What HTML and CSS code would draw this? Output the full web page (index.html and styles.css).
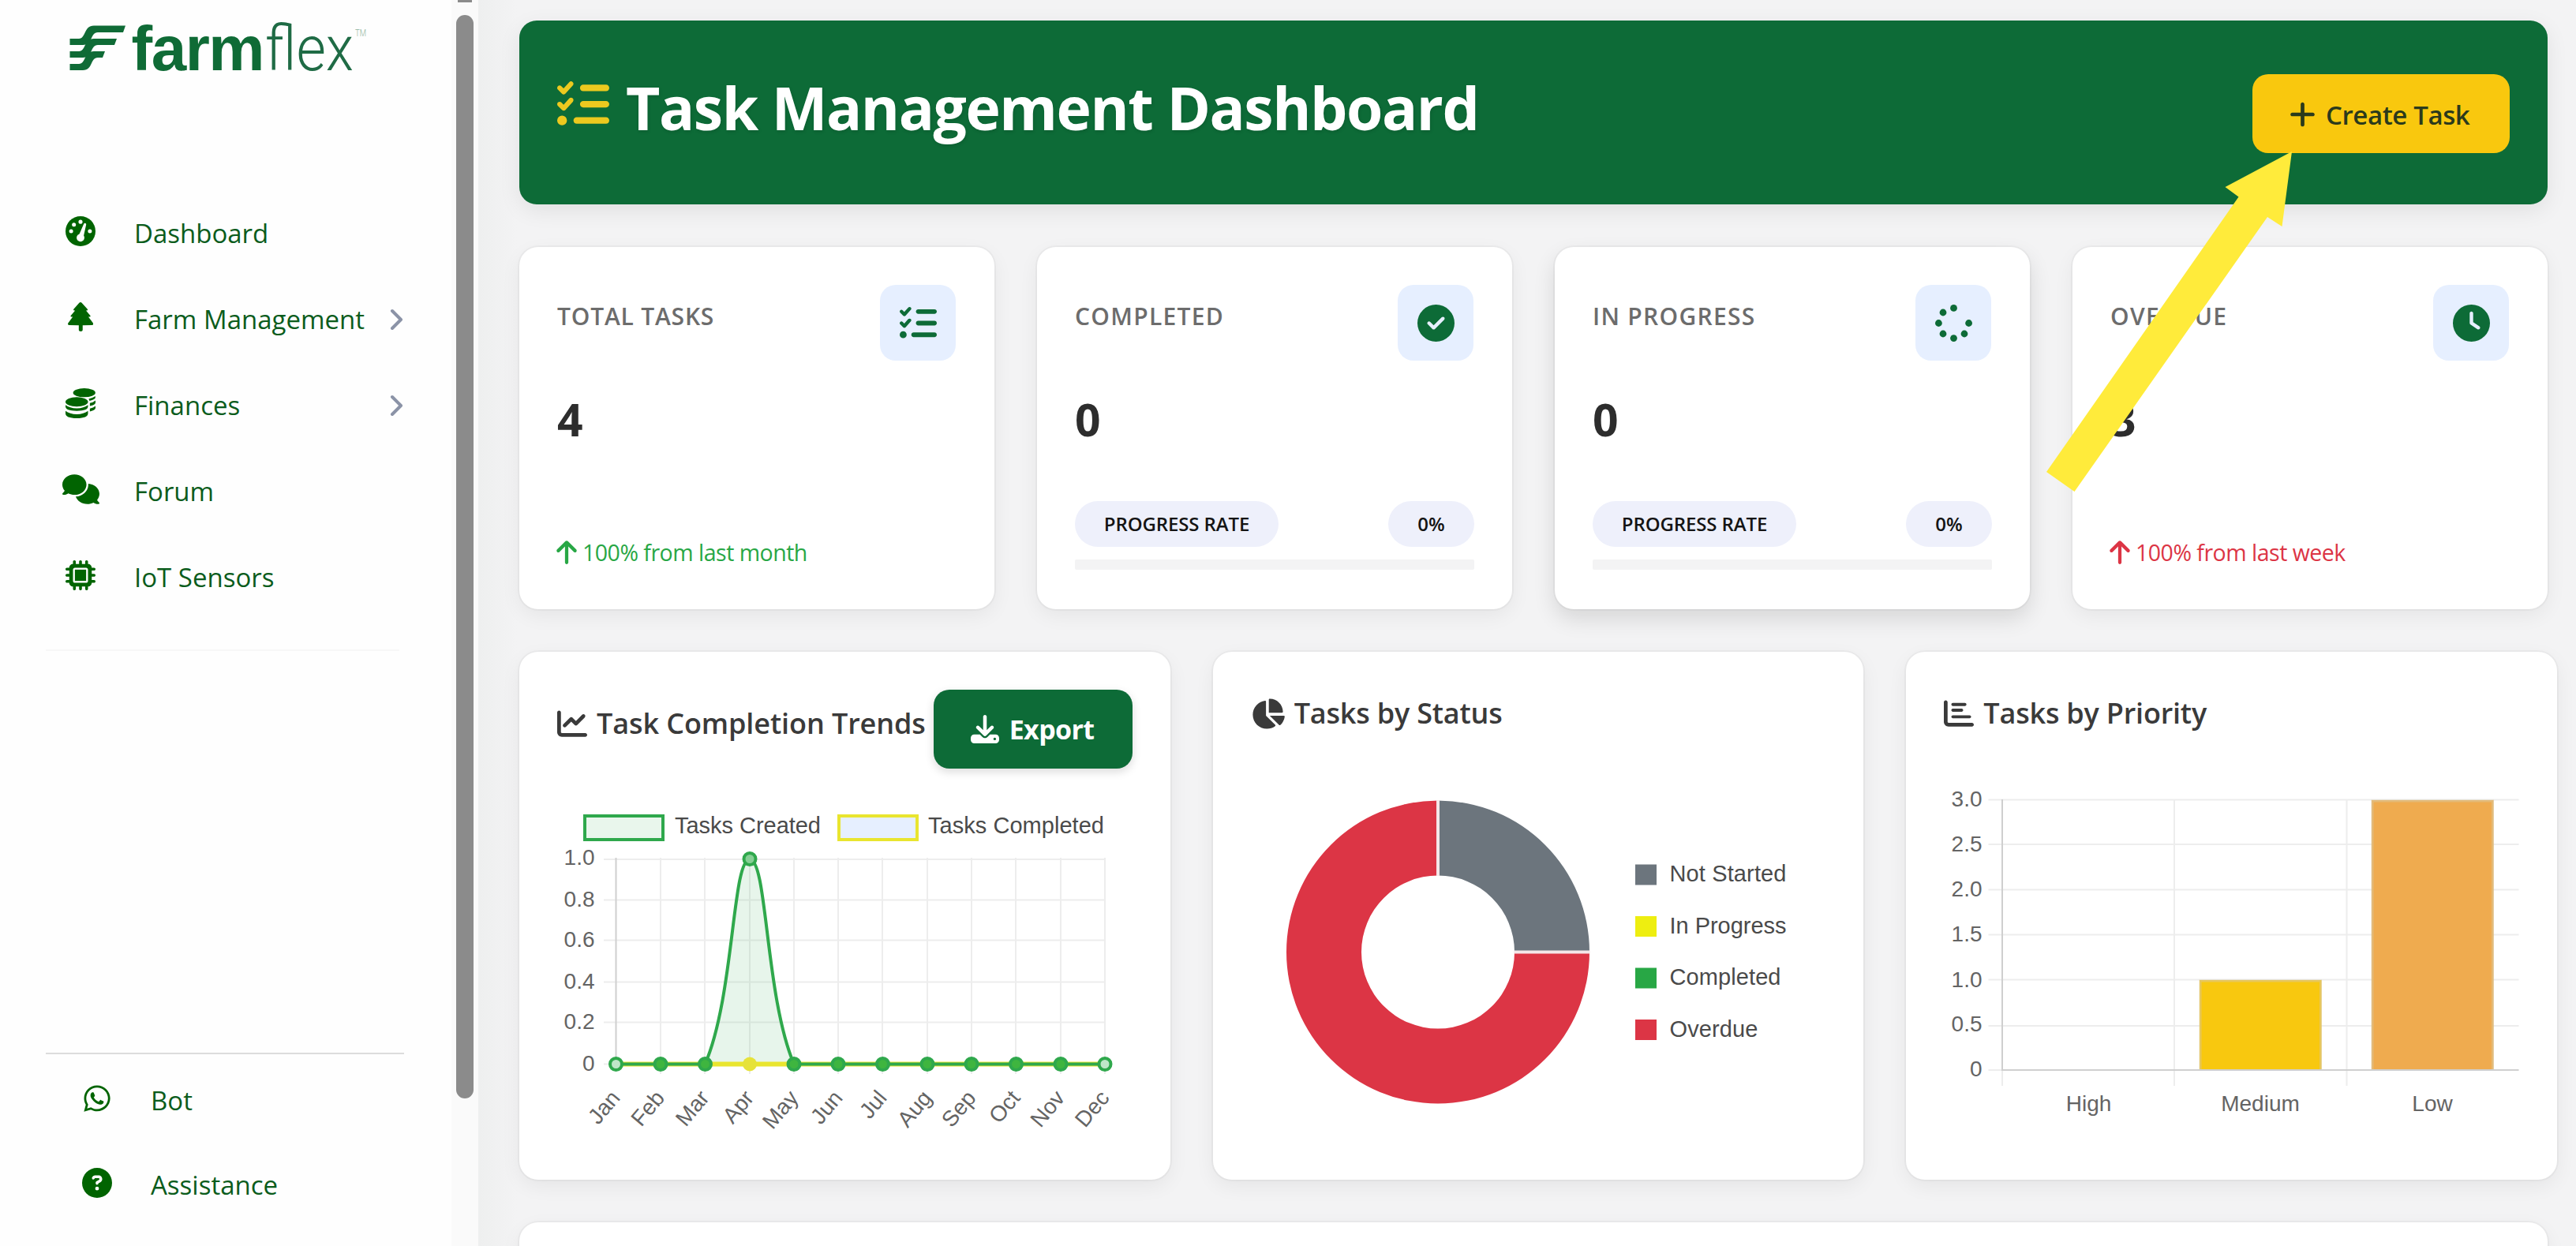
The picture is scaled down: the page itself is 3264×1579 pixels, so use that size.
FILE: index.html
```html
<!DOCTYPE html>
<html lang="en">
<head>
<meta charset="utf-8">
<title>Task Management Dashboard</title>
<link rel="stylesheet" href="styles.css">
</head>
<body>
<svg class="sprite" aria-hidden="true">
  <symbol id="i-list" viewBox="0 0 512 512"><path d="M152.1 38.2c9.9 8.9 10.7 24 1.8 33.9l-72 80c-4.4 4.9-10.6 7.8-17.2 7.9s-12.9-2.4-17.6-7L7 113C-2.3 103.6-2.3 88.4 7 79s24.6-9.4 33.9 0l22.1 22.1 55.1-61.2c8.9-9.9 24-10.7 33.9-1.8zm0 160c9.9 8.9 10.7 24 1.8 33.9l-72 80c-4.4 4.9-10.6 7.8-17.2 7.9s-12.9-2.4-17.6-7L7 273c-9.4-9.4-9.4-24.6 0-33.9s24.6-9.4 33.9 0l22.1 22.1 55.1-61.2c8.9-9.9 24-10.7 33.9-1.8zM224 96c0-17.7 14.3-32 32-32H480c17.7 0 32 14.3 32 32s-14.3 32-32 32H256c-17.7 0-32-14.3-32-32zm0 160c0-17.7 14.3-32 32-32H480c17.7 0 32 14.3 32 32s-14.3 32-32 32H256c-17.7 0-32-14.3-32-32zM160 416c0-17.7 14.3-32 32-32H480c17.7 0 32 14.3 32 32s-14.3 32-32 32H192c-17.7 0-32-14.3-32-32zM48 368a48 48 0 1 1 0 96 48 48 0 1 1 0-96z"/></symbol>
  <symbol id="i-check" viewBox="0 0 512 512"><path d="M256 512A256 256 0 1 0 256 0a256 256 0 1 0 0 512zM369 209L241 337c-9.4 9.4-24.6 9.4-33.9 0l-64-64c-9.4-9.4-9.4-24.6 0-33.9s24.6-9.4 33.9 0l47 47L335 175c9.4-9.4 24.6-9.4 33.9 0s9.4 24.6 0 33.9z"/></symbol>
  <symbol id="i-spinner" viewBox="0 0 512 512"><circle cx="256" cy="48" r="48"/><circle cx="256" cy="464" r="48"/><circle cx="48" cy="256" r="48"/><circle cx="464" cy="256" r="48"/><circle cx="109" cy="403" r="48"/><circle cx="109" cy="109" r="48"/><circle cx="403" cy="403" r="48"/></symbol>
  <symbol id="i-clock" viewBox="0 0 512 512"><path d="M256 0a256 256 0 1 1 0 512A256 256 0 1 1 256 0zM232 120V256c0 8 4 15.5 10.7 20l96 64c11 7.4 25.9 4.4 33.3-6.7s4.4-25.9-6.7-33.3L280 243.2V120c0-13.3-10.7-24-24-24s-24 10.7-24 24z"/></symbol>
  <symbol id="i-up" viewBox="0 0 384 512"><path d="M214.6 41.4c-12.5-12.5-32.8-12.5-45.3 0l-160 160c-12.5 12.5-12.5 32.8 0 45.3s32.8 12.5 45.3 0L160 141.2V448c0 17.7 14.3 32 32 32s32-14.3 32-32V141.2L329.4 246.6c12.5 12.5 32.8 12.5 45.3 0s12.5-32.8 0-45.3l-160-160z"/></symbol>
  <symbol id="i-plus" viewBox="0 0 448 512"><path d="M256 80c0-17.7-14.3-32-32-32s-32 14.3-32 32V224H48c-17.7 0-32 14.3-32 32s14.3 32 32 32H192V432c0 17.7 14.3 32 32 32s32-14.3 32-32V288H400c17.7 0 32-14.3 32-32s-14.3-32-32-32H256V80z"/></symbol>
  <symbol id="i-download" viewBox="0 0 512 512"><path d="M288 32c0-17.7-14.3-32-32-32s-32 14.3-32 32V274.7l-73.4-73.4c-12.5-12.5-32.8-12.5-45.3 0s-12.5 32.8 0 45.3l128 128c12.5 12.5 32.8 12.5 45.3 0l128-128c12.5-12.5 12.5-32.8 0-45.3s-32.8-12.5-45.3 0L288 274.7V32zM64 352c-35.3 0-64 28.7-64 64v32c0 35.3 28.7 64 64 64H448c35.3 0 64-28.7 64-64V416c0-35.3-28.7-64-64-64H346.5l-45.3 45.3c-25 25-65.5 25-90.5 0L165.5 352H64zm368 56a24 24 0 1 1 0 48 24 24 0 1 1 0-48z"/></symbol>
  <symbol id="i-line" viewBox="0 0 512 512"><path d="M64 64c0-17.7-14.3-32-32-32S0 46.3 0 64V400c0 44.2 35.8 80 80 80H480c17.7 0 32-14.3 32-32s-14.3-32-32-32H80c-8.8 0-16-7.2-16-16V64zm406.6 86.6c12.5-12.5 12.5-32.8 0-45.3s-32.8-12.5-45.3 0L320 210.7l-57.4-57.4c-12.5-12.5-32.8-12.5-45.3 0l-112 112c-12.5 12.5-12.5 32.8 0 45.3s32.8 12.5 45.3 0L240 221.3l57.4 57.4c12.5 12.5 32.8 12.5 45.3 0l128-128z"/></symbol>
  <symbol id="i-pie" viewBox="0 0 576 512"><path d="M304 240V16.6c0-9 7-16.6 16-16.6C443.7 0 544 100.3 544 224c0 9-7.6 16-16.6 16H304zM32 272C32 150.7 122.1 50.3 239 34.3c9.2-1.3 17 6.1 17 15.4V288L412.5 444.5c6.7 6.7 6.2 17.7-1.5 23.1C371.8 495.6 323.8 512 272 512C139.5 512 32 404.6 32 272zm526.4 16c9.3 0 16.6 7.8 15.4 17c-7.7 55.9-34.6 105.6-73.9 142.3c-6 5.6-15.4 5.2-21.2-.7L320 288H558.4z"/></symbol>
  <symbol id="i-bar" viewBox="0 0 512 512"><path d="M32 32c17.7 0 32 14.3 32 32V400c0 8.8 7.2 16 16 16H480c17.7 0 32 14.3 32 32s-14.3 32-32 32H80c-44.2 0-80-35.8-80-80V64C0 46.3 14.3 32 32 32zm96 72c0-14 12-26 26-26l206 0c14 0 26 12 26 26s-12 26-26 26H154c-14 0-26-12-26-26zm26 72H304c14 0 26 12 26 26s-12 26-26 26H154c-14 0-26-12-26-26s12-26 26-26zm0 112H440c14 0 26 12 26 26s-12 26-26 26H154c-14 0-26-12-26-26s12-26 26-26z"/></symbol>
  <symbol id="i-gauge" viewBox="0 0 512 512"><circle cx="256" cy="256" r="256"/><g fill="#fff"><circle cx="256" cy="96" r="34"/><circle cx="144" cy="144" r="34"/><circle cx="96" cy="256" r="34"/><circle cx="416" cy="256" r="34"/><circle cx="256" cy="368" r="66"/><path d="M218 348L312 130q12-18 31-8 16 10 8 30L300 380z"/></g></symbol>
  <symbol id="i-tree" viewBox="0 0 448 512"><path d="M224 0q13 0 22 10l100 112q12 16-6 22h-20l76 90q12 18-8 22h-26l78 104 6 10q8 30-18 30l-166 4v84q0 24-34 24t-34-24v-84l-174-4q-24-4-16-30l84-114h-26q-20-4-8-22l76-90h-20q-18-6-6-22L202 10q9-10 22-10z"/></symbol>
  <symbol id="i-coins" viewBox="0 0 512 512"><ellipse cx="320" cy="76" rx="190" ry="76"/><ellipse cx="192" cy="232" rx="192" ry="80"/><path d="M0 286q70 56 192 56t192-56v24q0 76-192 76T0 310zM0 388q70 56 192 56t192-56v40q0 84-192 84T0 428zM396 182q70-16 114-46v20q0 40-100 60zM416 254q60-14 96-44v36q0 36-96 58zM416 346q60-14 96-44v36q0 36-96 58z"/></symbol>
  <symbol id="i-comments" viewBox="0 0 640 512"><path d="M208 352c114.9 0 208-78.8 208-176S322.9 0 208 0S0 78.8 0 176c0 38.6 14.7 74.3 39.6 103.4c-3.5 9.4-8.7 17.7-14.2 24.7c-4.8 6.2-9.7 11-13.3 14.3c-1.8 1.6-3.3 2.9-4.3 3.7c-.5 .4-.9 .7-1.1 .8l-.2 .2C1 327.2-1.4 334.4 .8 340.9S9.1 352 16 352c21.8 0 43.8-5.6 62.1-12.5c9.2-3.5 17.8-7.4 25.2-11.4C134.1 343.3 169.8 352 208 352zM448 176c0 112.3-99.1 196.9-216.5 207C255.8 457.4 336.4 512 432 512c38.2 0 73.9-8.7 104.7-23.9c7.5 4 16 7.9 25.2 11.4c18.3 6.9 40.3 12.5 62.1 12.5c6.9 0 13.1-4.5 15.2-11.1c2.1-6.6-.2-13.8-5.8-17.9l-.2-.2c-.2-.2-.6-.4-1.1-.8c-1-.8-2.5-2-4.3-3.7c-3.6-3.3-8.5-8.1-13.3-14.3c-5.5-7-10.7-15.4-14.2-24.7c24.9-29 39.6-64.7 39.6-103.4c0-92.8-84.9-168.9-192.6-175.5c.4 5.1 .6 10.3 .6 15.5z"/></symbol>
  <symbol id="i-chip" viewBox="0 0 512 512"><path fill-rule="evenodd" d="M176 24c0-13.3-10.7-24-24-24s-24 10.7-24 24V64c-35.3 0-64 28.7-64 64H24c-13.3 0-24 10.7-24 24s10.7 24 24 24H64v56H24c-13.3 0-24 10.7-24 24s10.7 24 24 24H64v56H24c-13.3 0-24 10.7-24 24s10.7 24 24 24H64c0 35.3 28.7 64 64 64v40c0 13.3 10.7 24 24 24s24-10.7 24-24V448h56v40c0 13.3 10.7 24 24 24s24-10.7 24-24V448h56v40c0 13.3 10.7 24 24 24s24-10.7 24-24V448c35.3 0 64-28.7 64-64h40c13.3 0 24-10.7 24-24s-10.7-24-24-24H448V280h40c13.3 0 24-10.7 24-24s-10.7-24-24-24H448V176h40c13.3 0 24-10.7 24-24s-10.7-24-24-24H448c0-35.3-28.7-64-64-64V24c0-13.3-10.7-24-24-24s-24 10.7-24 24V64H280V24c0-13.3-10.7-24-24-24s-24 10.7-24 24V64H176V24zM160 128H352c17.7 0 32 14.3 32 32V352c0 17.7-14.3 32-32 32H160c-17.7 0-32-14.3-32-32V160c0-17.7 14.3-32 32-32z"/><path d="M160 160h192v192H160z"/></symbol>
  <symbol id="i-whatsapp" viewBox="0 0 448 512"><path d="M380.9 97.1C339 55.1 283.2 32 223.9 32c-122.4 0-222 99.6-222 222 0 39.1 10.2 77.3 29.6 111L0 480l117.7-30.9c32.4 17.7 68.9 27 106.1 27h.1c122.3 0 224.1-99.6 224.1-222 0-59.3-25.2-115-67.1-157zm-157 341.6c-33.2 0-65.7-8.9-94-25.7l-6.7-4-69.8 18.3L72 359.2l-4.4-7c-18.5-29.4-28.2-63.3-28.2-98.2 0-101.7 82.8-184.5 184.6-184.5 49.3 0 95.6 19.2 130.4 54.1 34.8 34.9 56.2 81.2 56.1 130.5 0 101.8-84.9 184.6-186.6 184.6zm101.2-138.2c-5.5-2.8-32.8-16.2-37.9-18-5.1-1.9-8.8-2.8-12.5 2.8-3.7 5.6-14.3 18-17.6 21.8-3.2 3.7-6.5 4.2-12 1.4-32.6-16.3-54-29.1-75.5-66-5.7-9.8 5.7-9.1 16.3-30.3 1.8-3.7.9-6.9-.5-9.7-1.4-2.8-12.5-30.1-17.1-41.2-4.5-10.8-9.1-9.3-12.5-9.5-3.2-.2-6.9-.2-10.6-.2-3.7 0-9.7 1.4-14.8 6.9-5.1 5.6-19.4 19-19.4 46.3 0 27.3 19.9 53.7 22.6 57.4 2.8 3.7 39.1 59.7 94.8 83.8 35.2 15.2 49 16.5 66.6 13.9 10.7-1.6 32.8-13.4 37.4-26.4 4.6-13 4.6-24.1 3.2-26.4-1.3-2.5-5-3.9-10.5-6.6z"/></symbol>
  <symbol id="i-help" viewBox="0 0 512 512"><path d="M256 512A256 256 0 1 0 256 0a256 256 0 1 0 0 512zM169.8 165.3c7.9-22.3 29.1-37.3 52.8-37.3h58.3c34.9 0 63.1 28.3 63.1 63.1c0 22.6-12.1 43.5-31.7 54.8L280 264.4c-.2 13-10.9 23.6-24 23.6c-13.3 0-24-10.7-24-24V250.5c0-8.6 4.6-16.5 12.1-20.8l44.3-25.4c4.7-2.7 7.6-7.7 7.6-13.1c0-8.4-6.8-15.1-15.1-15.1H222.6c-3.4 0-6.4 2.1-7.5 5.3l-.4 1.2c-4.4 12.5-18.2 19-30.6 14.6s-19-18.2-14.6-30.6l.4-1.2zM224 352a32 32 0 1 1 64 0 32 32 0 1 1-64 0z"/></symbol>
  <symbol id="i-chevron" viewBox="0 0 18 28"><path d="M3 3l11 11L3 25" fill="none" stroke="#8b93a7" stroke-width="4" stroke-linecap="round" stroke-linejoin="round"/></symbol>
</svg>

<div class="app">
  <aside class="sidebar">
    <div class="sidebar-body">
      <svg class="logo" viewBox="58 0 454 110">
        <g fill="#0f6b36">
          <path d="M88.5 49H100C109 49 106 32.6 119 32.6H159L156 41H124C114 41 118 57 105 57H88.5z"/>
          <path d="M88.5 65H100C109 65 106 49 119 49H148L145 57H124C114 57 118 73 105 73H88.5z"/>
          <path d="M88.5 81H100C109 81 106 65 119 65H133L130 73H124C114 73 118 89 105 89H88.5z"/>
        </g>
        <text class="logo-bold" x="166.5" y="89" textLength="169">farm</text>
        <text class="logo-thin" x="336" y="89" textLength="112" lengthAdjust="spacingAndGlyphs">flex</text>
        <text class="logo-tm" x="450" y="46" textLength="14" lengthAdjust="spacingAndGlyphs">TM</text>
      </svg>
      <nav class="nav">
        <a class="nav-item"><span class="nav-icon"><svg class="s36"><use href="#i-gauge"/></svg></span>Dashboard</a>
        <a class="nav-item"><span class="nav-icon"><svg class="tree"><use href="#i-tree"/></svg></span>Farm Management<svg class="chevron"><use href="#i-chevron"/></svg></a>
        <a class="nav-item"><span class="nav-icon"><svg class="s36"><use href="#i-coins"/></svg></span>Finances<svg class="chevron"><use href="#i-chevron"/></svg></a>
        <a class="nav-item"><span class="nav-icon"><svg class="comments"><use href="#i-comments"/></svg></span>Forum</a>
        <a class="nav-item"><span class="nav-icon"><svg class="s36"><use href="#i-chip"/></svg></span>IoT Sensors</a>
      </nav>
      <nav class="nav nav-bottom">
        <a class="nav-item"><span class="nav-icon"><svg class="whatsapp"><use href="#i-whatsapp"/></svg></span>Bot</a>
        <a class="nav-item"><span class="nav-icon"><svg class="s36"><use href="#i-help"/></svg></span>Assistance</a>
      </nav>
    </div>
    <div class="scrollbar"><i class="scroll-cap"></i><i class="scroll-thumb"></i></div>
  </aside>

  <main class="main">
    <header class="banner">
      <h1 class="banner-title"><svg class="banner-icon"><use href="#i-list"/></svg>Task Management Dashboard</h1>
      <button class="btn btn-create"><svg class="plus"><use href="#i-plus"/></svg>Create Task</button>
    </header>

    <section class="stats">
      <article class="card stat">
        <div class="stat-top"><span class="stat-label label-total">TOTAL TASKS</span><span class="stat-icon"><svg><use href="#i-list"/></svg></span></div>
        <div class="stat-value">4</div>
        <div class="trend up"><svg><use href="#i-up"/></svg>100% from last month</div>
      </article>
      <article class="card stat">
        <div class="stat-top"><span class="stat-label">COMPLETED</span><span class="stat-icon"><svg><use href="#i-check"/></svg></span></div>
        <div class="stat-value">0</div>
        <div class="progress"><span class="pill pill-name">PROGRESS RATE</span><span class="pill">0%</span></div>
        <div class="track"></div>
      </article>
      <article class="card stat raised">
        <div class="stat-top"><span class="stat-label">IN PROGRESS</span><span class="stat-icon"><svg><use href="#i-spinner"/></svg></span></div>
        <div class="stat-value">0</div>
        <div class="progress"><span class="pill pill-name">PROGRESS RATE</span><span class="pill">0%</span></div>
        <div class="track"></div>
      </article>
      <article class="card stat">
        <div class="stat-top"><span class="stat-label">OVERDUE</span><span class="stat-icon"><svg><use href="#i-clock"/></svg></span></div>
        <div class="stat-value">3</div>
        <div class="trend down"><svg><use href="#i-up"/></svg>100% from last week</div>
      </article>
    </section>

    <section class="charts">
      <article class="card chart">
        <div class="chart-head">
          <h2 class="chart-title tall"><svg class="s38"><use href="#i-line"/></svg>Task Completion Trends</h2>
          <button class="btn btn-export"><svg class="download"><use href="#i-download"/></svg>Export</button>
        </div>
        <svg class="plot" viewBox="706 1021 728 425">
          <rect x="741" y="1033" width="99" height="30" fill="#e9f6ec" stroke="#2fa84c" stroke-width="4"/>
          <rect x="1063" y="1033" width="99" height="30" fill="#e6efff" stroke="#e9e52f" stroke-width="4"/>
          <g class="legend"><text x="855" y="1055" textLength="185">Tasks Created</text><text x="1176" y="1055" textLength="223">Tasks Completed</text></g>
          <path class="grid" d="M765 1088H1400M765 1139.5H1400M765 1190.5H1400M765 1243.5H1400M765 1294.5H1400M765 1347.5H1400M837 1086V1360M893 1086V1360M950 1086V1360M1006 1086V1360M1062 1086V1360M1118 1086V1360M1175 1086V1360M1231 1086V1360M1287 1086V1360M1344 1086V1360M1400 1086V1360"/>
          <path class="axis" d="M780.5 1086V1347"/>
          <path d="M893.4 1347.5C930.6 1261 927.6 1088 950 1088C972.4 1088 969.4 1261 1006 1347.5z" fill="#28a745" fill-opacity=".11"/>
          <path d="M780.4 1347.5H1400" stroke="#e9e52f" stroke-width="6"/>
          <path d="M780.4 1347.5H893.4C930.6 1261 927.6 1088 950 1088C972.4 1088 969.4 1261 1006 1347.5H1400" fill="none" stroke="#2fa84c" stroke-width="4"/>
          <circle cx="950" cy="1347.5" r="9" fill="#e6e23a"/>
          <g class="points">
            <circle cx="780.5" cy="1347.5" r="7.5" class="edge"/><circle cx="837" cy="1347.5" r="7.5"/><circle cx="893.5" cy="1347.5" r="7.5"/><circle cx="950" cy="1087.5" r="7.5" class="peak"/><circle cx="1006" cy="1347.5" r="7.5"/><circle cx="1062" cy="1347.5" r="7.5"/><circle cx="1118.5" cy="1347.5" r="7.5"/><circle cx="1175" cy="1347.5" r="7.5"/><circle cx="1231" cy="1347.5" r="7.5"/><circle cx="1287.5" cy="1347.5" r="7.5"/><circle cx="1344" cy="1347.5" r="7.5"/><circle cx="1400" cy="1347.5" r="7.5" class="edge"/>
          </g>
          <g class="ticks end"><text x="753.5" y="1095">1.0</text><text x="753.5" y="1147.5">0.8</text><text x="753.5" y="1199">0.6</text><text x="753.5" y="1251.5">0.4</text><text x="753.5" y="1302.5">0.2</text><text x="753.5" y="1356">0</text></g>
          <g class="ticks end">
            <text transform="translate(787 1391) rotate(-50)">Jan</text><text transform="translate(843.5 1391) rotate(-50)">Feb</text><text transform="translate(900 1391) rotate(-50)">Mar</text><text transform="translate(956.5 1391) rotate(-50)">Apr</text><text transform="translate(1013 1391) rotate(-50)">May</text><text transform="translate(1069 1391) rotate(-50)">Jun</text><text transform="translate(1125 1391) rotate(-50)">Jul</text><text transform="translate(1182 1391) rotate(-50)">Aug</text><text transform="translate(1238 1391) rotate(-50)">Sep</text><text transform="translate(1294 1391) rotate(-50)">Oct</text><text transform="translate(1350.5 1391) rotate(-50)">Nov</text><text transform="translate(1407 1391) rotate(-50)">Dec</text>
          </g>
        </svg>
      </article>

      <article class="card chart">
        <div class="chart-head"><h2 class="chart-title"><svg class="pie"><use href="#i-pie"/></svg>Tasks by Status</h2></div>
        <svg class="plot" viewBox="1585.5 981 728 465">
          <path d="M1822.5 1013.5a192 192 0 0 1 192 192h-95a97 97 0 0 0-97-97z" fill="#6c757d"/>
          <path d="M2014.5 1205.5a192 192 0 1 1-192-192v95a97 97 0 1 0 97 97z" fill="#dc3545"/>
          <path d="M1822.5 1013V1109M1919 1205.5H2015" stroke="#f4e6e8" stroke-width="4"/>
          <rect x="2072.5" y="1094.5" width="27" height="26" fill="#6c757d"/><rect x="2072.5" y="1160" width="27" height="26" fill="#eeee10"/><rect x="2072.5" y="1225.5" width="27" height="26" fill="#28a745"/><rect x="2072.5" y="1291" width="27" height="26" fill="#dc3545"/>
          <g class="legend"><text x="2116" y="1116" textLength="148">Not Started</text><text x="2116" y="1181.5" textLength="148">In Progress</text><text x="2116" y="1247" textLength="141">Completed</text><text x="2116" y="1312.5" textLength="112">Overdue</text></g>
        </svg>
      </article>

      <article class="card chart">
        <div class="chart-head"><h2 class="chart-title"><svg class="s38"><use href="#i-bar"/></svg>Tasks by Priority</h2></div>
        <svg class="plot" viewBox="2463.500 981 728 465">
          <path class="grid" d="M2520 1012.5H3192M2520 1069H3192M2520 1126.5H3192M2520 1183.5H3192M2520 1240.5H3192M2520 1299H3192M2520 1355H2537M2537.5 1355V1375M2755.5 1012V1375M2974 1012V1375"/>
          <path d="M2787.5 1355V1241H2942V1355z" fill="#f8c80f"/>
          <path d="M3005.5 1355V1013H3160V1355z" fill="#efab4f"/>
          <path d="M2788.5 1355V1242H2941V1355M3006.5 1355V1014H3159V1355" fill="none" stroke="#d8c79a" stroke-opacity=".55" stroke-width="3"/>
          <path class="axis" d="M2537.5 1012V1355H3192"/>
          <g class="ticks end"><text x="2512" y="1021">3.0</text><text x="2512" y="1077.5">2.5</text><text x="2512" y="1135">2.0</text><text x="2512" y="1192">1.5</text><text x="2512" y="1249.5">1.0</text><text x="2512" y="1306">0.5</text><text x="2512" y="1363">0</text></g>
          <g class="ticks middle"><text x="2647" y="1407">High</text><text x="2864.5" y="1407">Medium</text><text x="3082.5" y="1407">Low</text></g>
        </svg>
      </article>
    </section>

    <section class="card next"></section>
  </main>
  <svg class="pointer" viewBox="0 0 312 432"><path d="M311 0L298.500 95L280 83L35.500 431L0 406L243.500 57.500L226.500 45z" fill="#ffeb3b"/></svg>
</div>
</body>
</html>
```
FILE: styles.css
```css
* { box-sizing: border-box; }
html, body { margin: 0; height: 100%; overflow: hidden; }
body { font-family: "Open Sans", "Noto Sans", sans-serif; color: #333; background: #f3f3f4; }
svg { display: block; fill: currentColor; flex: none; }
h1, h2 { margin: 0; }
button { border: 0; font-family: inherit; }
.sprite { position: absolute; width: 0; height: 0; }

.app { position: relative; display: flex; width: 3264px; height: 1579px; overflow: hidden; }

/* Sidebar */
.sidebar { display: flex; width: 606px; background: #fff; flex: none; }
.sidebar-body { display: flex; flex-direction: column; width: 572px; padding: 0 60px 24px 58px; background: #fefefe; }
.logo { width: 454px; height: 110px; margin-bottom: 131px; }
.logo-bold { font: 700 80px "Liberation Sans", sans-serif; fill: #0f6b36; }
.logo-thin { font: 300 80px Roboto, sans-serif; fill: #1f6b45; }
.logo-tm { font: 300 12px Roboto, sans-serif; fill: #8fb3a0; }
.nav { width: 448px; border-bottom: 2px solid #f7f7f7; height: 584px; flex: none; }
.nav-item { display: flex; align-items: center; height: 109px; font-size: 33px; line-height: 45px; color: #0b5c1c; }
.nav-icon { display: flex; justify-content: center; width: 48px; margin: 0 44px 6px 20px; color: #016401; }
.s36 { width: 38px; height: 38px; }
.tree { width: 34px; height: 37px; }
.comments { width: 47px; height: 38px; }
.whatsapp { width: 34px; height: 38px; }
.chevron { width: 18px; height: 28px; margin: 0 -6px 0 auto; }
.nav-bottom { width: 454px; margin-top: 509px; height: auto; border-bottom: 0; border-top: 2px solid #dcdcdc; padding: 5px 0 0 21px; }
.nav-bottom .nav-item { height: 107px; }
.scrollbar { width: 34px; background: #fafafa; display: flex; flex-direction: column; align-items: center; }
.scroll-cap { width: 18px; height: 3px; background: #8b8b8b; }
.scroll-thumb { width: 22px; height: 1373px; margin-top: 16px; border-radius: 11px; background: #8b8b8b; }

/* Main column */
.main { flex: 1; display: flex; flex-direction: column; gap: 54px; padding: 26px 36px 0 52px; background: linear-gradient(90deg, #eeefef, #f3f3f4 50px); }
.banner { display: flex; justify-content: space-between; align-items: flex-start; height: 233px; flex: none; padding: 68px 48px; border-radius: 22px; background: #0d6b37; box-shadow: 0 8px 28px rgba(0, 0, 0, .08); }
.banner-title { display: flex; align-items: center; gap: 21px; font-size: 75px; line-height: 84px; letter-spacing: -1.45px; font-weight: 700; color: #fff; text-shadow: 1px 2px 4px rgba(0, 0, 0, .12); }
.banner-icon { width: 66px; height: 66px; margin-bottom: 9px; color: #ecc91f; }
.btn { display: flex; align-items: center; height: 100px; border-radius: 20px; white-space: nowrap; }
.btn-create { width: 326px; padding: 2px 0 0 47px; gap: 13px; background: #f9c80e; color: #2b3a1c; font-size: 33px; font-weight: 600; letter-spacing: -.4px; }
.plus { width: 33px; height: 38px; }

.card { background: #fff; border-radius: 24px; box-shadow: 0 0 0 2px rgba(0, 0, 0, .03), 0 8px 26px rgba(0, 0, 0, .06); }
.stats { display: grid; grid-template-columns: repeat(4, 1fr); gap: 54px; height: 459px; flex: none; }
.stat { display: flex; flex-direction: column; padding: 48px 48px 50px; }
.raised { box-shadow: 0 0 0 2px rgba(0, 0, 0, .03), 0 12px 28px rgba(0, 0, 0, .12); }
.stat-top { display: flex; justify-content: space-between; }
.stat-label { font-size: 30px; line-height: 80px; font-weight: 600; letter-spacing: 1.3px; color: #6c6c6c; }
.label-total { letter-spacing: .8px; }
.stat-icon { display: grid; place-items: center; width: 96px; height: 96px; margin-right: 1px; border-radius: 20px; background: #e6efff; color: #0d6b37; }
.stat-icon svg { width: 47px; height: 47px; }
.stat-value { margin-top: 34px; font-size: 57px; line-height: 80px; font-weight: 700; color: #2d2d2d; }
.trend { display: flex; align-items: center; gap: 7px; margin: auto 0 0 -1px; font-size: 28.5px; line-height: 44px; letter-spacing: -.5px; }
.trend svg { width: 26px; height: 34px; }
.up { color: #28a745; }
.down { color: #dc3545; }
.progress { display: flex; justify-content: space-between; margin-top: auto; }
.pill { width: 109px; height: 58px; border-radius: 29px; background: #eef0fb; color: #141414; font-size: 24px; line-height: 58px; font-weight: 600; text-align: center; }
.pill-name { width: 258px; letter-spacing: -.12px; }
.track { height: 13px; margin-top: 16px; background: #f3f3f4; border-radius: 2px; }

/* Chart cards */
.charts { display: grid; grid-template-columns: repeat(3, 1fr); gap: 54px; margin-right: -12px; height: 669px; flex: none; }
.chart { padding: 48px; }
.chart-head { display: flex; justify-content: space-between; align-items: flex-start; }
.chart-title { display: flex; align-items: center; gap: 12px; font-size: 36px; line-height: 60px; font-weight: 600; letter-spacing: -.2px; color: #3a3a3a; white-space: nowrap; }
.chart-title.tall { line-height: 86px; letter-spacing: -.1px; }
.s38 { width: 38px; height: 38px; }
.pie { width: 43px; height: 39px; }
.btn-export { width: 252px; padding: 0 0 0 47px; gap: 13px; background: #0d6b37; color: #fff; font-size: 34px; font-weight: 700; letter-spacing: -.6px; box-shadow: 0 4px 12px rgba(0, 0, 0, .15); }
.download { width: 36px; height: 36px; }
.plot { width: 728px; height: auto; margin-top: 48px; overflow: visible; font: 29px "Liberation Sans", Arial, sans-serif; }
.legend { fill: #4a4a4a; }
.ticks { fill: #646464; font-size: 28px; }
.end { text-anchor: end; }
.middle { text-anchor: middle; }
.grid { fill: none; stroke: #ededed; stroke-width: 2; }
.axis { fill: none; stroke: #cfcfcf; stroke-width: 2; }
.points circle { fill: #3fb53f; stroke: #2fa84c; stroke-width: 4; }
.points .edge { fill: #bfe6c8; }
.points .peak { fill: #86cf95; }
.next { height: 200px; flex: none; }

/* Annotation arrow laid over the page */
.pointer { position: absolute; left: 2593px; top: 192px; width: 312px; height: 432px; }
```
